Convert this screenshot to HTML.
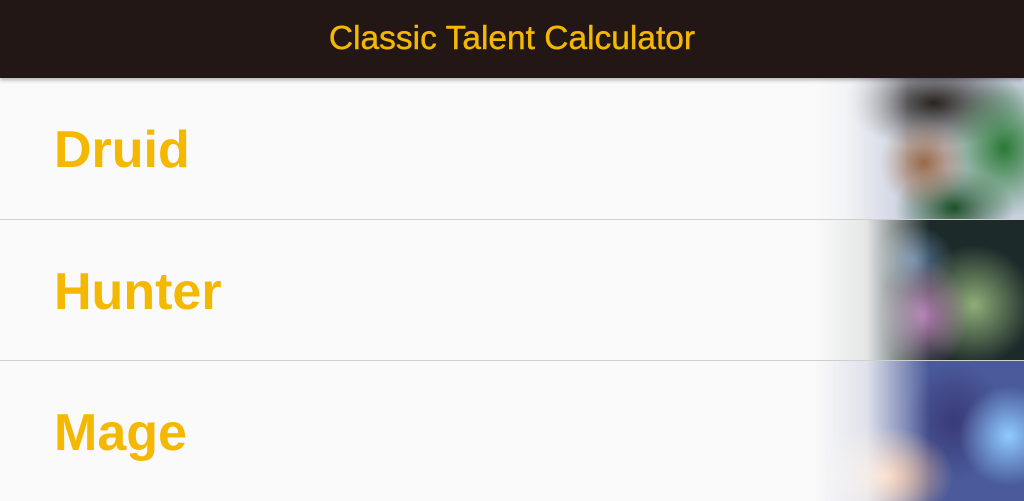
<!DOCTYPE html>
<html><head><style>
body{margin:0;width:1024px;height:500px;overflow:hidden;background:#fafafa;font-family:"Liberation Sans",sans-serif}
.h{height:78px;background:#231715;color:#f5b800;font-size:33.5px;text-align:center;line-height:78px;box-shadow:0 2px 4px rgba(0,0,0,.3);position:relative;z-index:2;-webkit-text-stroke:.4px #f5b800}
.r{position:relative;height:140px;border-bottom:1px solid #cfcfcf;overflow:hidden}
.r span{position:absolute;left:54px;top:0;line-height:144px;font-size:52px;font-weight:bold;color:#f5b800}
.im{position:absolute;right:0;top:0;width:210px;height:100%}
.f{position:absolute;right:0;top:0;width:210px;height:100%}
</style></head><body>
<div class="h">Classic Talent Calculator</div>
<div class="r" style="height:141px"><span>Druid</span>
<div class="im" style="background:radial-gradient(ellipse 45px 45px at 110px 85px,#9a6a48,transparent),radial-gradient(ellipse 60px 70px at 190px 70px,#2a7a35,transparent),radial-gradient(ellipse 90px 45px at 120px 25px,#2a2420,transparent),radial-gradient(ellipse 60px 40px at 140px 130px,#1e5028,transparent),#c9d0e0"></div>
<div class="f" style="background:linear-gradient(90deg,#fafafa 0%,rgba(250,250,250,.85) 15%,rgba(250,250,250,0) 45%)"></div></div>
<div class="r"><span>Hunter</span>
<div class="im" style="background:radial-gradient(ellipse 45px 55px at 110px 95px,#b07ab0,transparent),radial-gradient(ellipse 60px 60px at 160px 85px,#8fae78,transparent),radial-gradient(ellipse 40px 35px at 100px 40px,#5a7a9a,transparent),#1d2a2a"></div>
<div class="f" style="background:linear-gradient(90deg,#fafafa 0%,rgba(250,250,250,.9) 25%,rgba(250,250,250,0) 55%)"></div></div>
<div class="r" style="border:0"><span>Mage</span>
<div class="im" style="background:radial-gradient(ellipse 50px 50px at 195px 75px,#8fcaff,transparent),radial-gradient(ellipse 70px 50px at 70px 115px,#ffc090,transparent),radial-gradient(ellipse 50px 60px at 140px 60px,#3a3a78,transparent),#4a5a9a"></div>
<div class="f" style="background:linear-gradient(90deg,#fafafa 0%,rgba(250,250,250,.85) 25%,rgba(250,250,250,0) 55%)"></div></div>
</body></html>
